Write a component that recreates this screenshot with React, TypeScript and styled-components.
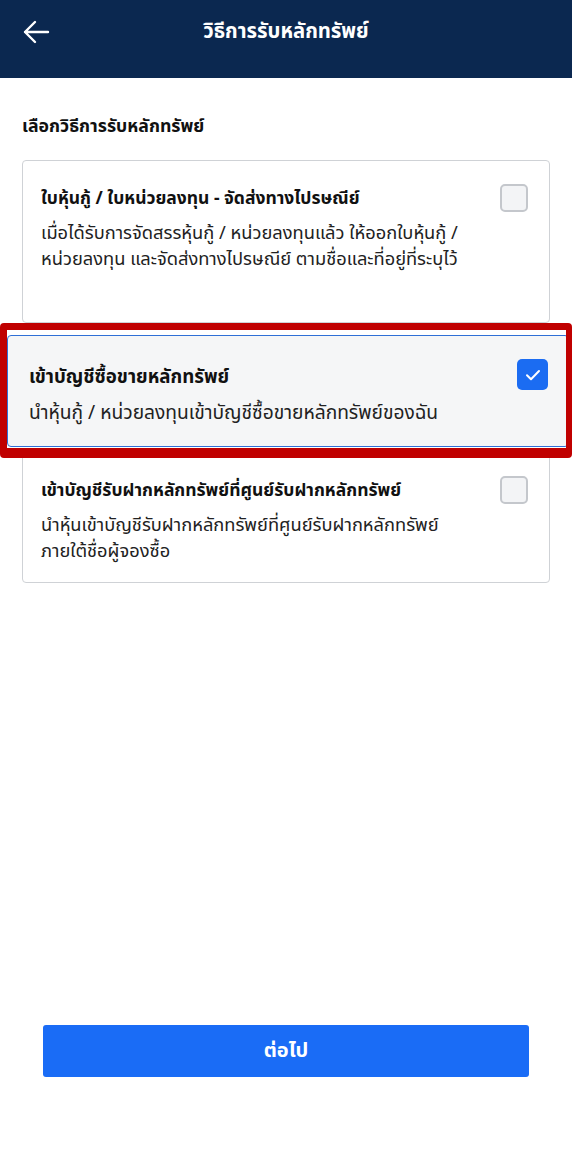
import React from "react";
import styled, { createGlobalStyle } from "styled-components";

const GlobalStyle = createGlobalStyle`
  html, body { margin: 0; padding: 0; background: #ffffff; }
  body { font-family: "Noto Sans", "Noto Sans Thai", "Noto Sans Thai UI", "Loma", sans-serif; color: #111; }
  * { box-sizing: border-box; }
`;

const Page = styled.div`
  width: 572px;
  min-height: 1156px;
  display: flex;
  flex-direction: column;
  background: #fff;
`;

const Header = styled.header`
  height: 78px;
  background: #0b2850;
  display: grid;
  grid-template-columns: 70px 1fr 70px;
  align-items: center;
  padding-bottom: 15px;
`;

const BackButton = styled.button`
  background: none;
  border: none;
  padding: 0 0 0 22px;
  display: flex;
  align-items: center;
  color: #fff;
  cursor: pointer;
`;

const Title = styled.h1`
  margin: 0;
  text-align: center;
  color: #fff;
  font-size: 20.3px;
  font-weight: 700;
`;

const Content = styled.main`
  padding: 34px 22px 0;
  display: flex;
  flex-direction: column;
`;

const SectionLabel = styled.h2`
  margin: 0 0 22px;
  font-size: 17.7px;
  font-weight: 700;
  color: #111;
  line-height: 26px;
`;

const List = styled.div`
  display: flex;
  flex-direction: column;
`;

const Card = styled.div<{ $selected?: boolean; $minHeight?: number }>`
  display: grid;
  grid-template-columns: 1fr auto;
  column-gap: 16px;
  align-content: start;
  min-height: ${(p) => p.$minHeight ?? 0}px;
  border: 1px solid ${(p) => (p.$selected ? "#2f6fd6" : "#cfd2d6")};
  border-radius: 4px;
  background: ${(p) => (p.$selected ? "#f5f6f7" : "#fff")};
  padding: ${(p) => (p.$selected ? "26px 20px 21px 21px" : "23px 21px 19px 18px")};
  margin-right: ${(p) => (p.$selected ? "-3px" : "0")};
`;

const CardText = styled.div`
  display: flex;
  flex-direction: column;
  gap: 9px;
`;

const CardTitle = styled.div<{ $selected?: boolean }>`
  font-size: ${(p) => (p.$selected ? "18.7px" : "17.5px")};
  font-weight: 700;
  line-height: ${(p) => (p.$selected ? "27px" : "26px")};
  color: #111;
`;

const CardDesc = styled.div<{ $selected?: boolean }>`
  font-size: ${(p) => (p.$selected ? "19.2px" : "18.3px")};
  line-height: ${(p) => (p.$selected ? "27px" : "26px")};
  color: #222;
`;

const Check = styled.span<{ $checked?: boolean; $size: number }>`
  width: ${(p) => p.$size}px;
  height: ${(p) => p.$size}px;
  border-radius: 5px;
  display: flex;
  align-items: center;
  justify-content: center;
  background: ${(p) => (p.$checked ? "#1b6cf2" : "#f3f4f6")};
  border: ${(p) => (p.$checked ? "none" : "2px solid #c4c7cc")};
  margin-top: ${(p) => (p.$checked ? "-3px" : "0")};
`;

const Highlight = styled.div`
  position: relative;
  z-index: 1;
  margin: 0 -22px;
  border-style: solid;
  border-color: #c00000;
  border-width: 7px 6px 10px 7px;
  border-radius: 4px;
  padding: 5px 0 1px 0;
  background: #fff;
  overflow: hidden;
`;

const LastCard = styled.div`
  margin-top: -6px;
`;

const Footer = styled.div`
  margin-top: auto;
  padding: 0 43px 79px;
`;

const NextButton = styled.button`
  width: 100%;
  height: 52px;
  border: none;
  border-radius: 3px;
  background: #1a6cf6;
  color: #fff;
  font-family: inherit;
  font-size: 20px;
  font-weight: 700;
  cursor: pointer;
`;

const ArrowIcon = () => (
  <svg width="28" height="24" viewBox="0 0 28 24" fill="none">
    <path d="M26 12H3M13 2L3 12l10 10" stroke="#fff" strokeWidth="2.4" strokeLinecap="round" strokeLinejoin="round" />
  </svg>
);

const CheckMark = () => (
  <svg width="16" height="12" viewBox="0 0 16 12" fill="none">
    <path d="M2 6.2l4 4L14 2" stroke="#fff" strokeWidth="2" strokeLinecap="round" strokeLinejoin="round" />
  </svg>
);

export default function App() {
  return (
    <>
      <GlobalStyle />
      <Page>
        <Header>
          <BackButton aria-label="back">
            <ArrowIcon />
          </BackButton>
          <Title>วิธีการรับหลักทรัพย์</Title>
          <span />
        </Header>
        <Content>
          <SectionLabel>เลือกวิธีการรับหลักทรัพย์</SectionLabel>
          <List>
            <Card $minHeight={163}>
              <CardText>
                <CardTitle>ใบหุ้นกู้ / ใบหน่วยลงทุน - จัดส่งทางไปรษณีย์</CardTitle>
                <CardDesc>
                  เมื่อได้รับการจัดสรรหุ้นกู้ / หน่วยลงทุนแล้ว ให้ออกใบหุ้นกู้ /
                  <br />
                  หน่วยลงทุน และจัดส่งทางไปรษณีย์ ตามชื่อและที่อยู่ที่ระบุไว้
                </CardDesc>
              </CardText>
              <Check $size={28} />
            </Card>
            <Highlight>
              <Card $selected>
                <CardText>
                  <CardTitle $selected>เข้าบัญชีซื้อขายหลักทรัพย์</CardTitle>
                  <CardDesc $selected>นำหุ้นกู้ / หน่วยลงทุนเข้าบัญชีซื้อขายหลักทรัพย์ของฉัน</CardDesc>
                </CardText>
                <Check $checked $size={31}>
                  <CheckMark />
                </Check>
              </Card>
            </Highlight>
            <LastCard>
              <Card>
                <CardText>
                  <CardTitle>เข้าบัญชีรับฝากหลักทรัพย์ที่ศูนย์รับฝากหลักทรัพย์</CardTitle>
                  <CardDesc>
                    นำหุ้นเข้าบัญชีรับฝากหลักทรัพย์ที่ศูนย์รับฝากหลักทรัพย์
                    <br />
                    ภายใต้ชื่อผู้จองซื้อ
                  </CardDesc>
                </CardText>
                <Check $size={28} />
              </Card>
            </LastCard>
          </List>
        </Content>
        <Footer>
          <NextButton>ต่อไป</NextButton>
        </Footer>
      </Page>
    </>
  );
}
